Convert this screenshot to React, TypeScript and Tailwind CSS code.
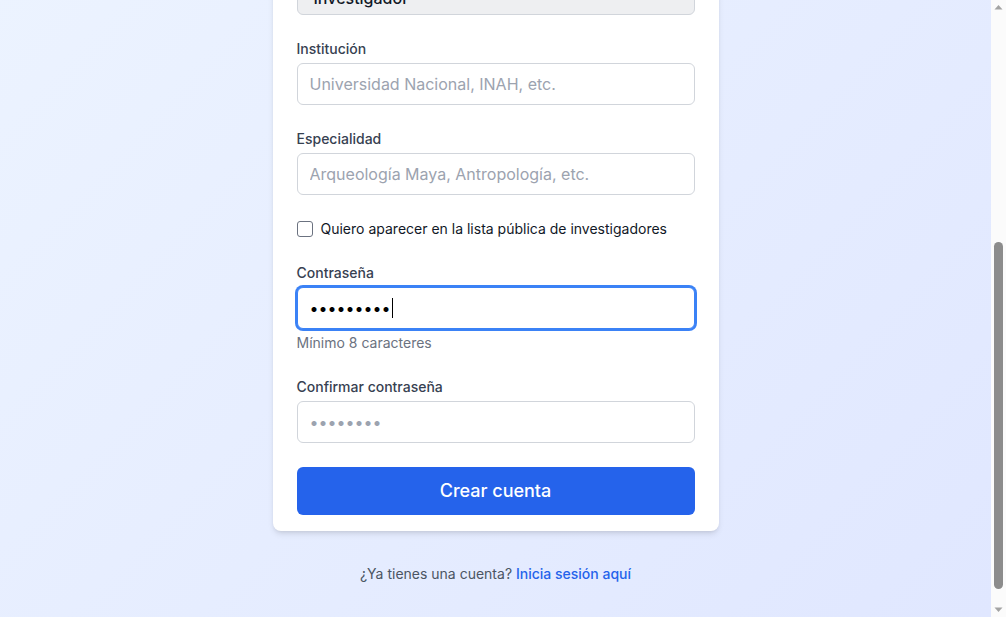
import React, { useLayoutEffect, useRef } from "react";

function Field({ label, placeholder }: { label: string; placeholder?: string }) {
  return (
    <div>
      <label className="block text-sm font-medium text-[#374151] mb-1">{label}</label>
      <input
        readOnly
        placeholder={placeholder}
        className="w-full px-3 py-2 text-base border border-[#d1d5db] rounded-md outline-none placeholder:text-[#9ca3af] bg-white text-[#111827]"
      />
    </div>
  );
}

function Scrollbar() {
  return (
    <div className="w-[15px] h-screen shrink-0 bg-[#fbfbfb] flex flex-col items-center">
      <svg width="15" height="15" viewBox="0 0 15 15" className="shrink-0">
        <path d="M3.5 9.5 L7.5 5 L11.5 9.5 Z" fill="#a3a3a3" />
      </svg>
      <div className="flex-1 w-full flex flex-col items-center pt-[227px] pb-[13px]">
        <div className="flex-1 w-[9px] rounded-full bg-[#8c8c8c]" />
      </div>
      <svg width="15" height="15" viewBox="0 0 15 15" className="shrink-0">
        <path d="M3.5 5.5 L7.5 10 L11.5 5.5 Z" fill="#a3a3a3" />
      </svg>
    </div>
  );
}

export default function App() {
  const ref = useRef<HTMLDivElement>(null);
  useLayoutEffect(() => {
    const el = ref.current;
    if (!el) return;
    el.scrollTop = el.scrollHeight;
    const t = setTimeout(() => {
      el.scrollTop = el.scrollHeight;
    }, 50);
    return () => clearTimeout(t);
  }, []);

  return (
    <div className="flex h-screen w-full overflow-hidden">
      <div ref={ref} className="flex-1 h-screen overflow-y-scroll [scrollbar-width:none]">
        <div
          className="min-h-full bg-gradient-to-br from-[#eff6ff] to-[#e0e7ff] flex flex-col items-center px-4 pt-8 pb-[33px]"
          style={{ fontFamily: "Inter, 'Noto Sans', sans-serif" }}
        >
          <div className="w-full max-w-[446px] flex flex-col items-center text-center">
            <div className="w-10 h-10 rounded-full bg-[#2563eb] flex items-center justify-center text-white font-bold">M</div>
            <h1 className="mt-3 text-3xl font-bold text-[#111827]">Crear cuenta</h1>
            <p className="mt-1 text-sm text-[#4b5563]">Regístrate como investigador</p>
          </div>

          <div className="mt-[37px] w-full max-w-[446px] bg-white rounded-lg shadow-md px-6 pt-6 pb-4">
            <div className="flex flex-col gap-6">
              <Field label="Nombre completo" placeholder="Tu nombre" />
              <Field label="Correo electrónico" placeholder="correo@ejemplo.com" />
              <div>
                <label className="block text-sm font-medium text-[#374151] mb-1">Tipo de cuenta</label>
                <div className="w-full h-[42px] px-4 pt-[12px] text-base leading-6 border border-[#d1d5db] rounded-md bg-[#eeeff1] text-[#111827] font-medium">
                  Investigador
                </div>
              </div>
              <Field label="Institución" placeholder="Universidad Nacional, INAH, etc." />
              <Field label="Especialidad" placeholder="Arqueología Maya, Antropología, etc." />

              <label className="flex items-center text-sm text-[#111827]">
                <span className="w-4 h-4 rounded-[3px] border border-[#6b7280] bg-white shrink-0" />
                <span className="ml-2">Quiero aparecer en la lista pública de investigadores</span>
              </label>

              <div>
                <label className="block text-sm font-medium text-[#374151] mb-1">Contraseña</label>
                <div className="w-full px-3 py-2 text-base border border-[#3b82f6] ring-2 ring-[#3b82f6] rounded-md bg-white text-black flex items-center h-[42px]">
                  <span>•••••••••</span>
                  <span className="ml-[1px] inline-block w-px h-[20px] bg-black" />
                </div>
                <p className="mt-1 text-sm text-[#6b7280]">Mínimo 8 caracteres</p>
              </div>

              <div>
                <label className="block text-sm font-medium text-[#374151] mb-1">Confirmar contraseña</label>
                <div className="w-full px-3 py-2 text-base border border-[#d1d5db] rounded-md bg-white text-[#9ca3af] flex items-center h-[42px]">
                  <span>••••••••</span>
                </div>
              </div>

              <button className="w-full h-12 bg-[#2563eb] text-white text-lg font-medium rounded-md">Crear cuenta</button>
            </div>
          </div>

          <p className="mt-[33px] text-sm text-[#4b5563] text-center">
            ¿Ya tienes una cuenta? <a className="text-[#2563eb] font-medium">Inicia sesión aquí</a>
          </p>
        </div>
      </div>
      <Scrollbar />
    </div>
  );
}
